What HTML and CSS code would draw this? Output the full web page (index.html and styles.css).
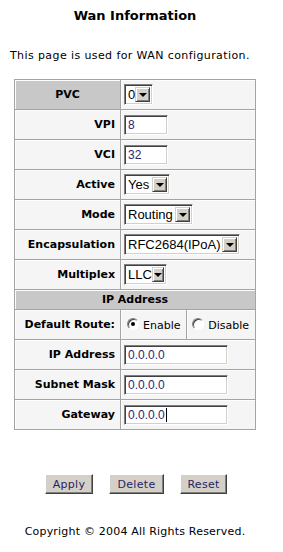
FILE: index.html
```html
<!DOCTYPE html>
<html>
<head>
<meta charset="utf-8">
<title>Wan Information</title>
<link rel="stylesheet" href="styles.css">
</head>
<body>
<div class="page">
  <h1 class="title">Wan Information</h1>
  <p class="desc">This page is used for WAN configuration.</p>
  <table class="form">
    <tr class="row">
      <th class="hd lbl-c">PVC</th>
      <td colspan="2"><span class="sel w-pvc"><span class="val">0</span><span class="arr"></span></span></td>
    </tr>
    <tr class="row">
      <th class="lbl">VPI</th>
      <td colspan="2"><span class="inp w-sm">8</span></td>
    </tr>
    <tr class="row">
      <th class="lbl">VCI</th>
      <td colspan="2"><span class="inp w-sm">32</span></td>
    </tr>
    <tr class="row">
      <th class="lbl">Active</th>
      <td colspan="2"><span class="sel w-yes"><span class="val">Yes</span><span class="arr"></span></span></td>
    </tr>
    <tr class="row">
      <th class="lbl">Mode</th>
      <td colspan="2"><span class="sel w-mode"><span class="val">Routing</span><span class="arr"></span></span></td>
    </tr>
    <tr class="row">
      <th class="lbl">Encapsulation</th>
      <td colspan="2"><span class="sel w-enc"><span class="val">RFC2684(IPoA)</span><span class="arr"></span></span></td>
    </tr>
    <tr class="row">
      <th class="lbl">Multiplex</th>
      <td colspan="2"><span class="sel w-llc"><span class="val">LLC</span><span class="arr"></span></span></td>
    </tr>
    <tr class="hrow">
      <th class="hd" colspan="3">IP Address</th>
    </tr>
    <tr class="row">
      <th class="lbl">Default Route:</th>
      <td class="rad-cell"><span class="radio on"></span><span class="rtxt">Enable</span></td>
      <td class="rad-cell"><span class="radio"></span><span class="rtxt">Disable</span></td>
    </tr>
    <tr class="row">
      <th class="lbl">IP Address</th>
      <td colspan="2"><span class="inp w-ip">0.0.0.0</span></td>
    </tr>
    <tr class="row">
      <th class="lbl">Subnet Mask</th>
      <td colspan="2"><span class="inp w-ip">0.0.0.0</span></td>
    </tr>
    <tr class="row">
      <th class="lbl">Gateway</th>
      <td colspan="2"><span class="inp w-ip">0.0.0.0<span class="caret"></span></span></td>
    </tr>
  </table>
  <div class="buttons">
    <button class="btn w-apply">Apply</button>
    <button class="btn w-delete">Delete</button>
    <button class="btn w-reset">Reset</button>
  </div>
  <p class="copy">Copyright &copy; 2004 All Rights Reserved.</p>
</div>
</body>
</html>
```

FILE: styles.css
```css
html, body {
  margin: 0;
  padding: 0;
  background: #fff;
}
body {
  font-family: "DejaVu Sans", Verdana, sans-serif;
  font-size: 11px;
  color: #000;
}
.page {
  width: 270px;
  padding-top: 8px;
}
.title {
  margin: 0;
  text-align: center;
  font-size: 13px;
  font-weight: bold;
  line-height: 16px;
}
.desc {
  margin: 24px 0 0 10px;
  line-height: 16px;
  letter-spacing: 0.4px;
}
.form {
  margin: 15px 0 0 14px;
  width: 242px;
  border-collapse: collapse;
  border: 1px solid #9a9a9a;
}
.form th, .form td {
  border: 1px solid #a4a4a4;
  background: #f5f5f5;
  box-shadow: inset 1px 1px 0 #fdfdfd;
  padding: 0;
}
.row th, .row td {
  height: 29px;
}
.hrow th {
  height: 19px;
}
.lbl {
  width: 100px;
  text-align: right;
  padding-right: 5px !important;
  font-weight: bold;
  white-space: nowrap;
}
.hd {
  background: #c8c8c8 !important;
  font-weight: bold;
  text-align: center;
}
.lbl-c {
  width: 105px;
}
.form td {
  padding-left: 3px;
  text-align: left;
  white-space: nowrap;
}
.sel {
  display: inline-flex;
  align-items: center;
  box-sizing: border-box;
  height: 21px;
  background: #fff;
  border-top: 1px solid #808080;
  border-left: 1px solid #808080;
  border-bottom: 1px solid #fff;
  border-right: 1px solid #fff;
  box-shadow: inset 1px 1px 0 #404040, inset -1px -1px 0 #d4d0c8;
  padding: 2px 2px 2px 3px;
  font-family: "Liberation Sans", Arial, sans-serif;
  font-size: 13px;
  vertical-align: middle;
}
.sel .val {
  flex: 1;
  line-height: 15px;
}
.arr {
  width: 15px;
  height: 15px;
  box-sizing: border-box;
  background: #d4d0c8;
  border-top: 1px solid #d4d0c8;
  border-left: 1px solid #d4d0c8;
  border-right: 1px solid #404040;
  border-bottom: 1px solid #404040;
  box-shadow: inset 1px 1px 0 #fff, inset -1px -1px 0 #808080;
  display: flex;
  align-items: center;
  justify-content: center;
}
.arr::after {
  content: "";
  width: 0;
  height: 0;
  border-left: 4px solid transparent;
  border-right: 4px solid transparent;
  border-top: 4px solid #000;
}
.w-pvc { width: 29px; }
.w-yes { width: 46px; }
.w-mode { width: 69px; }
.w-enc { width: 116px; }
.w-llc { width: 43px; }
.inp {
  display: inline-flex;
  align-items: center;
  box-sizing: border-box;
  height: 20px;
  background: #fff;
  border-top: 1px solid #808080;
  border-left: 1px solid #808080;
  border-bottom: 1px solid #fff;
  border-right: 1px solid #fff;
  box-shadow: inset 1px 1px 0 #404040, inset -1px -1px 0 #d4d0c8;
  padding-left: 3px;
  font-family: "Liberation Sans", Arial, sans-serif;
  font-size: 12px;
  color: #2b2872;
  vertical-align: middle;
}
.w-sm { width: 44px; }
.w-ip { width: 104px; }
.caret {
  display: inline-block;
  width: 1px;
  height: 14px;
  background: #000;
  margin-left: 1px;
}
.rad-cell {
  padding-left: 6px !important;
}
.rad-cell + .rad-cell {
  padding-left: 5px !important;
}
.radio {
  display: inline-block;
  box-sizing: border-box;
  width: 12px;
  height: 12px;
  border-radius: 50%;
  background: #fff;
  border: 1px solid;
  border-color: #808080 #fff #fff #808080;
  box-shadow: inset 1px 1px 0 #404040;
  vertical-align: -1px;
  position: relative;
}
.radio.on::after {
  content: "";
  position: absolute;
  left: 3px;
  top: 3px;
  width: 4px;
  height: 4px;
  border-radius: 50%;
  background: #000;
}
.rtxt {
  margin-left: 4px;
}
.buttons {
  display: flex;
  justify-content: center;
  gap: 16px;
  margin-top: 44px;
  padding-left: 2px;
}
.btn {
  box-sizing: border-box;
  height: 20px;
  padding: 0;
  background: #d4d0c8;
  border-top: 1px solid #fff;
  border-left: 1px solid #fff;
  border-right: 1px solid #404040;
  border-bottom: 1px solid #404040;
  box-shadow: inset -1px -1px 0 #808080;
  font-family: "DejaVu Sans", Verdana, sans-serif;
  font-size: 11px;
  letter-spacing: 0.3px;
  color: #241f66;
}
.w-apply { width: 48px; }
.w-delete { width: 55px; }
.w-reset { width: 47px; }
.copy {
  margin: 31px 0 0 0;
  text-align: center;
  line-height: 14px;
  letter-spacing: 0.2px;
}
```
